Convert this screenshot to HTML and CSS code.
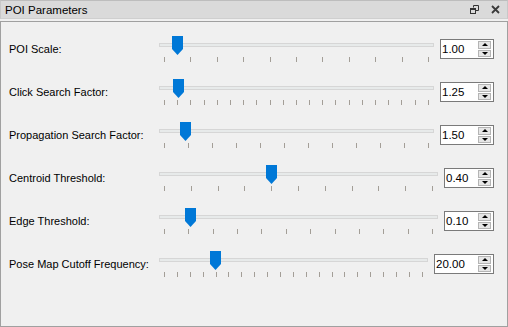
FILE: index.html
```html
<!doctype html>
<html lang="en">
    <head>
        <meta charset="utf-8">
        <title>POI Parameters</title>
        <link rel="stylesheet" href="styles.css">
    </head>
    <body>
        <div class="dock">
            <div class="titlebar">
                <span class="title">POI Parameters</span>
                <span class="tb-icons">
                    <svg class="tb-float" width="9" height="9" viewBox="0 0 9 9">
                        <path d="M3.5 2.5 V0.5 H8.5 V5.5 H6" fill="none" stroke="#333" stroke-width="1"/>
                        <rect x="0.5" y="3.5" width="5" height="5" fill="none" stroke="#333" stroke-width="1"/>
                        <rect x="0" y="3" width="6" height="2" fill="#333"/>
                    </svg>
                    <svg class="tb-close" width="9" height="9" viewBox="0 0 9 9">
                        <path d="M1 1 L8 8 M8 1 L1 8" stroke="#3a3a3a" stroke-width="1.8"/>
                    </svg>
                </span>
            </div>
            <div class="panel">
                <div class="row">
                    <label class="lbl">POI Scale:</label>
                    <div class="slider">
                        <div class="track"></div>
                        <svg class="handle" style="left:13px" width="11" height="19" viewBox="0 0 11 19"><polygon points="0,0 11,0 11,13 5.5,19 0,13"/></svg>
                        <div class="ticks"><i></i><i></i><i></i><i></i><i></i><i></i><i></i><i></i><i></i><i></i><i></i></div>
                    </div>
                    <div class="spin spin-54"><span class="val">1.00</span><span class="btns"><span class="up"></span><span class="down"></span></span></div>
                </div>
                <div class="row">
                    <label class="lbl">Click Search Factor:</label>
                    <div class="slider">
                        <div class="track"></div>
                        <svg class="handle" style="left:14px" width="11" height="19" viewBox="0 0 11 19"><polygon points="0,0 11,0 11,13 5.5,19 0,13"/></svg>
                        <div class="ticks"><i></i><i></i><i></i><i></i><i></i><i></i><i></i><i></i><i></i><i></i><i></i><i></i><i></i><i></i><i></i><i></i><i></i><i></i><i></i><i></i><i></i></div>
                    </div>
                    <div class="spin spin-54"><span class="val">1.25</span><span class="btns"><span class="up"></span><span class="down"></span></span></div>
                </div>
                <div class="row">
                    <label class="lbl">Propagation Search Factor:</label>
                    <div class="slider">
                        <div class="track"></div>
                        <svg class="handle" style="left:21px" width="11" height="19" viewBox="0 0 11 19"><polygon points="0,0 11,0 11,13 5.5,19 0,13"/></svg>
                        <div class="ticks"><i></i><i></i><i></i><i></i><i></i><i></i><i></i><i></i><i></i><i></i><i></i><i></i></div>
                    </div>
                    <div class="spin spin-54"><span class="val">1.50</span><span class="btns"><span class="up"></span><span class="down"></span></span></div>
                </div>
                <div class="row">
                    <label class="lbl">Centroid Threshold:</label>
                    <div class="slider">
                        <div class="track"></div>
                        <svg class="handle" style="left:107px" width="11" height="19" viewBox="0 0 11 19"><polygon points="0,0 11,0 11,13 5.5,19 0,13"/></svg>
                        <div class="ticks"><i></i><i></i><i></i><i></i><i></i><i></i><i></i><i></i><i></i><i></i><i></i></div>
                    </div>
                    <div class="spin spin-50"><span class="val">0.40</span><span class="btns"><span class="up"></span><span class="down"></span></span></div>
                </div>
                <div class="row">
                    <label class="lbl">Edge Threshold:</label>
                    <div class="slider">
                        <div class="track"></div>
                        <svg class="handle" style="left:26px" width="11" height="19" viewBox="0 0 11 19"><polygon points="0,0 11,0 11,13 5.5,19 0,13"/></svg>
                        <div class="ticks"><i></i><i></i><i></i><i></i><i></i><i></i><i></i><i></i><i></i><i></i><i></i><i></i></div>
                    </div>
                    <div class="spin spin-50"><span class="val">0.10</span><span class="btns"><span class="up"></span><span class="down"></span></span></div>
                </div>
                <div class="row">
                    <label class="lbl">Pose Map Cutoff Frequency:</label>
                    <div class="slider">
                        <div class="track"></div>
                        <svg class="handle" style="left:51px" width="11" height="19" viewBox="0 0 11 19"><polygon points="0,0 11,0 11,13 5.5,19 0,13"/></svg>
                        <div class="ticks"><i></i><i></i><i></i><i></i><i></i><i></i><i></i><i></i><i></i><i></i><i></i><i></i><i></i><i></i><i></i><i></i><i></i><i></i><i></i><i></i><i></i></div>
                    </div>
                    <div class="spin spin-60"><span class="val">20.00</span><span class="btns"><span class="up"></span><span class="down"></span></span></div>
                </div>
            </div>
        </div>
    </body>
</html>
```
FILE: styles.css
```css
html, body{
    margin: 0px;
    padding: 0px;
    background-color: #f0f0f0;
}
body{
    font-family: "Liberation Sans", Arial, sans-serif;
    font-size: 11px;
    color: #000;
}
.dock{
    width: 508px;
    height: 327px;
    display: flex;
    flex-direction: column;
    box-sizing: border-box;
}
.titlebar{
    height: 19px;
    box-sizing: border-box;
    background: #dadada;
    border-top: 1px solid #bdbdbd;
    border-left: 1px solid #c8c8c8;
    border-right: 1px solid #c8c8c8;
    border-bottom: 1px solid #cfcfcf;
    display: flex;
    align-items: center;
    justify-content: space-between;
    padding: 0 7px 0 4px;
}
.title{
    font-size: 11.5px;
    color: #000;
}
.tb-icons{
    display: flex;
    align-items: center;
    gap: 12px;
}
.tb-icons svg{
    display: block;
}
.panel{
    flex: 1;
    margin-top: 2px;
    border: 1px solid #a0a0a0;
    background: #f0f0f0;
    padding: 14px 13px 0 8px;
    display: flex;
    flex-direction: column;
    gap: 17px;
}
.row{
    height: 26px;
    display: flex;
    align-items: center;
}
.lbl{
    width: 150px;
    flex: none;
    white-space: nowrap;
}
.slider{
    flex: 1;
    height: 26px;
    position: relative;
    margin-right: 6px;
}
.track{
    margin-top: 7px;
    height: 4px;
    box-sizing: border-box;
    background: #e7eaea;
    border: 1px solid #d6d6d6;
}
.handle{
    position: absolute;
    top: 0px;
    fill: #0078d7;
    display: block;
}
.ticks{
    margin-top: 10px;
    padding: 0 5px;
    height: 5px;
    display: flex;
    justify-content: space-between;
}
.ticks i{
    width: 1px;
    height: 5px;
    background: #a39e97;
}
.spin{
    height: 20px;
    box-sizing: border-box;
    border: 1px solid #7a7a7a;
    background: #fff;
    display: flex;
    align-items: center;
    justify-content: space-between;
    flex: none;
}
.spin-54{ width: 54px; }
.spin-50{ width: 50px; }
.spin-60{ width: 60px; }
.val{
    padding-left: 1px;
    font-size: 11.5px;
}
.btns{
    width: 13px;
    height: 16px;
    margin-right: 2px;
    display: flex;
    flex-direction: column;
    gap: 1px;
}
.up, .down{
    flex: 1;
    box-sizing: border-box;
    background: #e6e6e6;
    border: 1px solid #b4b4b4;
    display: flex;
    align-items: center;
    justify-content: center;
}
.up::after{
    content: "";
    border-left: 3px solid transparent;
    border-right: 3px solid transparent;
    border-bottom: 3px solid #000;
}
.down::after{
    content: "";
    border-left: 3px solid transparent;
    border-right: 3px solid transparent;
    border-top: 3px solid #000;
}
```
